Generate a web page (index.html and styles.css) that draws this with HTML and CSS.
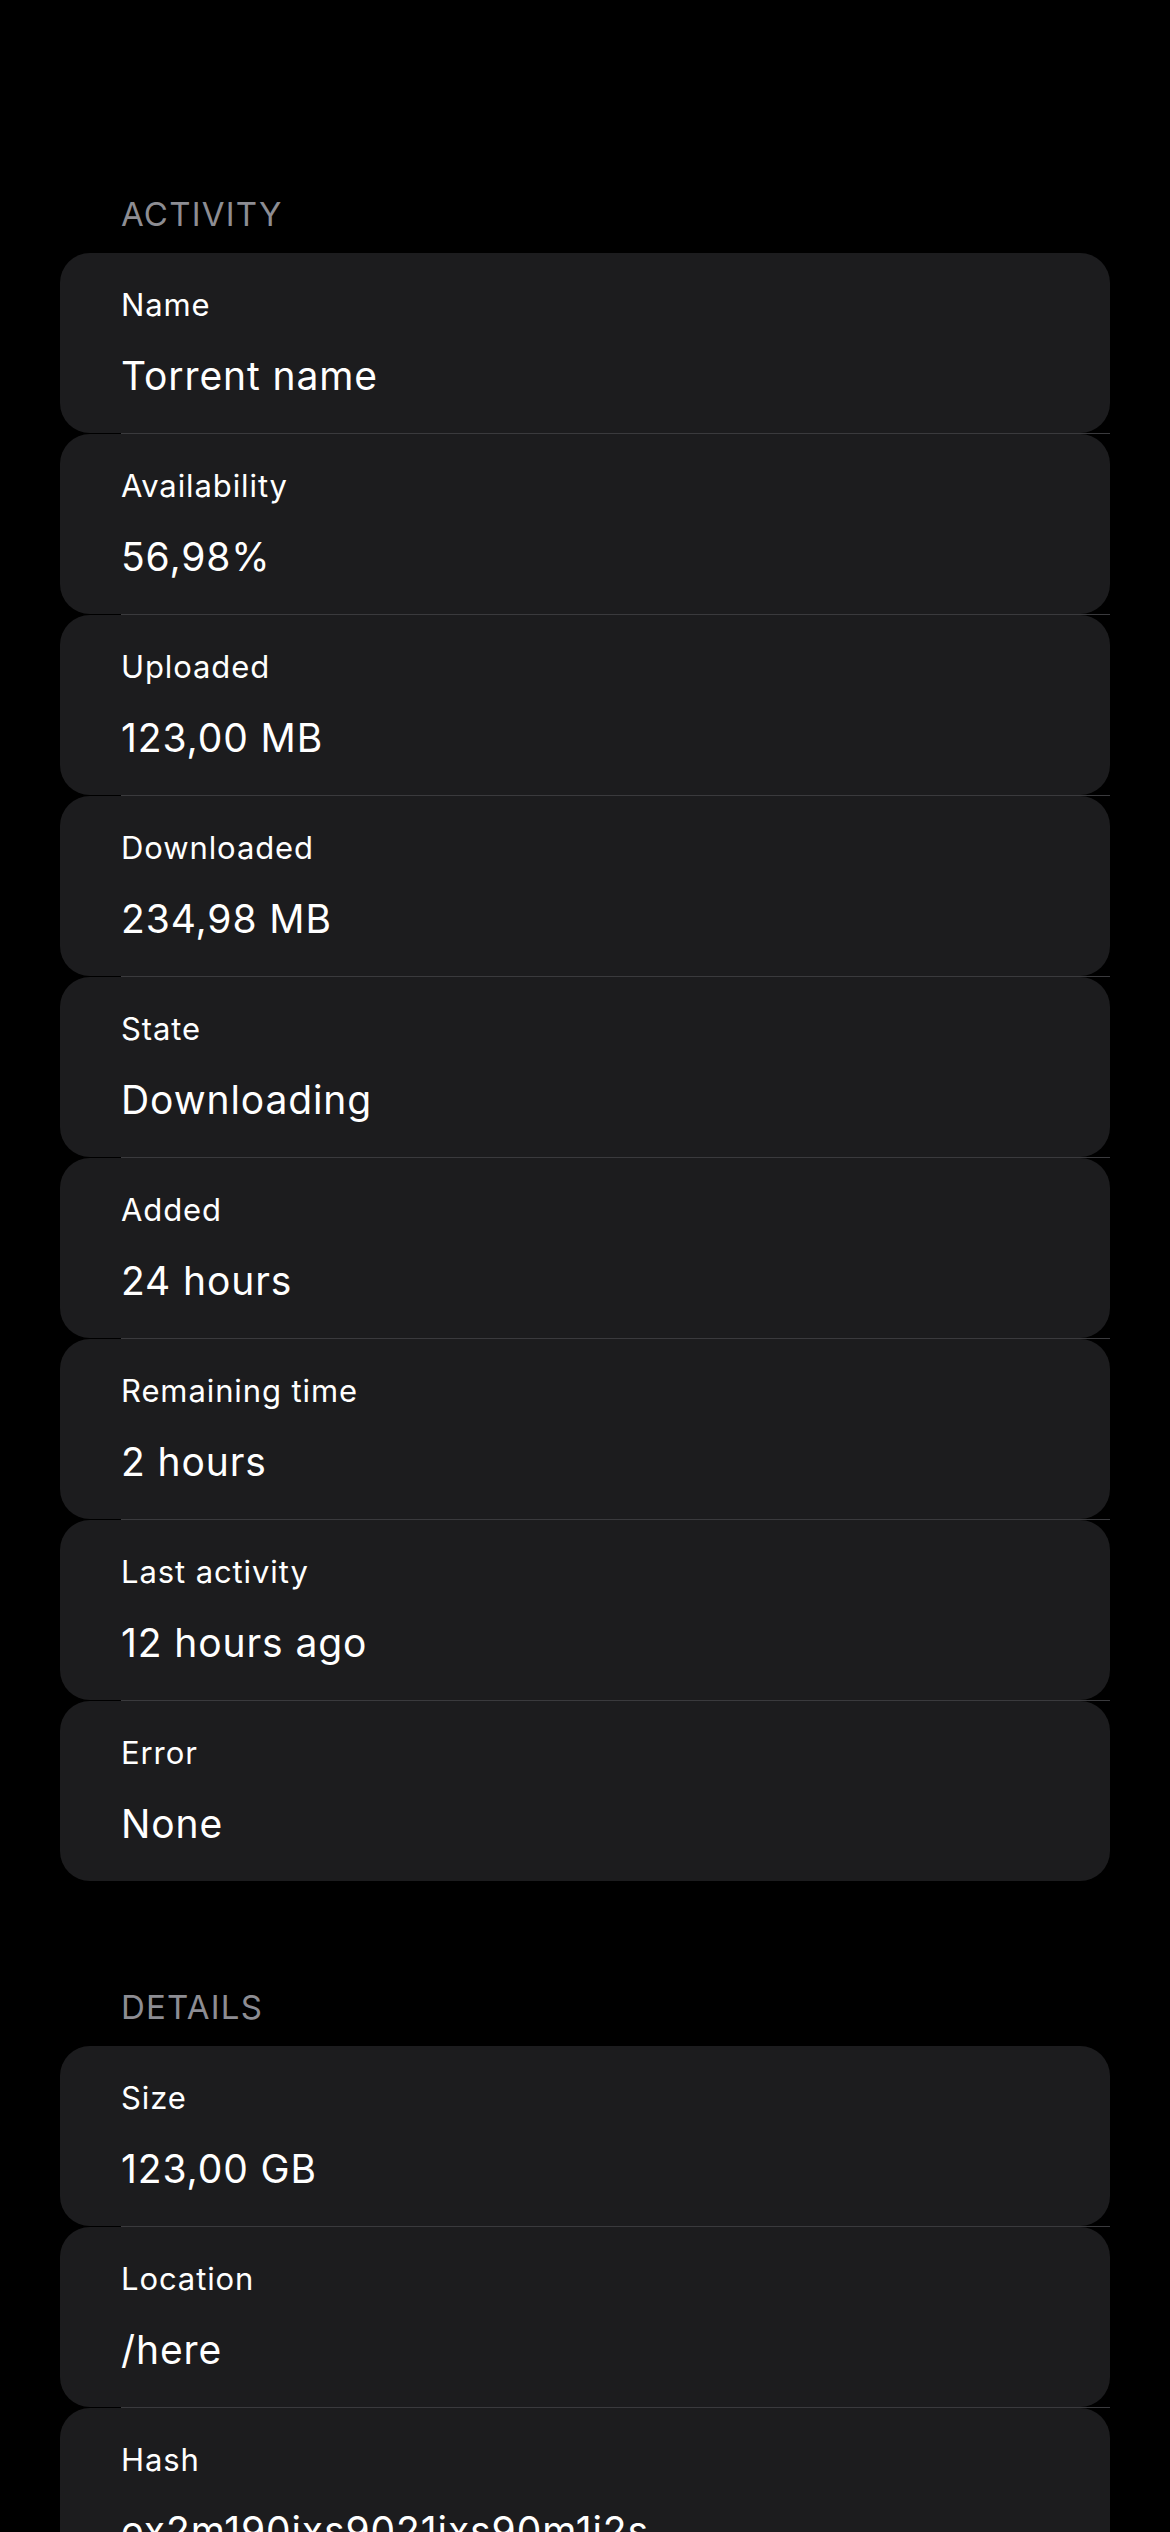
FILE: index.html
```html
<!DOCTYPE html>
<html lang="en">
<head>
<meta charset="utf-8">
<title>Torrent details</title>
<link rel="stylesheet" href="styles.css">
</head>
<body>
<main class="page">
  <section class="section">
    <h2 class="section-title">ACTIVITY</h2>
    <div class="list">
      <div class="cell"><div class="card"><span class="label">Name</span><span class="value">Torrent name</span></div></div>
      <div class="cell"><div class="card"><span class="label">Availability</span><span class="value">56,98%</span></div></div>
      <div class="cell"><div class="card"><span class="label">Uploaded</span><span class="value">123,00 MB</span></div></div>
      <div class="cell"><div class="card"><span class="label">Downloaded</span><span class="value">234,98 MB</span></div></div>
      <div class="cell"><div class="card"><span class="label">State</span><span class="value">Downloading</span></div></div>
      <div class="cell"><div class="card"><span class="label">Added</span><span class="value">24 hours</span></div></div>
      <div class="cell"><div class="card"><span class="label">Remaining time</span><span class="value">2 hours</span></div></div>
      <div class="cell"><div class="card"><span class="label">Last activity</span><span class="value">12 hours ago</span></div></div>
      <div class="cell"><div class="card"><span class="label">Error</span><span class="value">None</span></div></div>
    </div>
  </section>
  <section class="section">
    <h2 class="section-title">DETAILS</h2>
    <div class="list">
      <div class="cell"><div class="card"><span class="label">Size</span><span class="value">123,00 GB</span></div></div>
      <div class="cell"><div class="card"><span class="label">Location</span><span class="value">/here</span></div></div>
      <div class="cell"><div class="card"><span class="label">Hash</span><span class="value">ex2m190ixs9021ixs90m1i2s</span></div></div>
    </div>
  </section>
</main>
</body>
</html>
```
FILE: styles.css
```css
html, body {
  margin: 0;
  padding: 0;
  background: #000;
}

body {
  font-family: Inter, "Noto Sans", "Liberation Sans", sans-serif;
  color: #fff;
}

.page {
  padding: 194px 60px 0;
  display: flex;
  flex-direction: column;
  gap: 106px;
}

.section-title {
  margin: 0 0 19px;
  padding-left: 61px;
  font-size: 33px;
  line-height: 40px;
  font-weight: 400;
  letter-spacing: 1.2px;
  color: #8d8d93;
}

.list {
  display: flex;
  flex-direction: column;
}

.cell:not(:last-child)::after {
  content: "";
  display: block;
  height: 1px;
  margin-left: 61px;
  background: #3a3a3d;
}

.card {
  box-sizing: border-box;
  height: 180px;
  padding: 33px 30px 0 61px;
  background: #1c1c1e;
  border-radius: 30px;
  display: flex;
  flex-direction: column;
  gap: 29px;
}

.label {
  font-size: 31px;
  line-height: 38px;
  letter-spacing: 0.9px;
  white-space: nowrap;
}

.value {
  font-size: 39px;
  line-height: 46px;
  letter-spacing: 0.9px;
  white-space: nowrap;
}
```
